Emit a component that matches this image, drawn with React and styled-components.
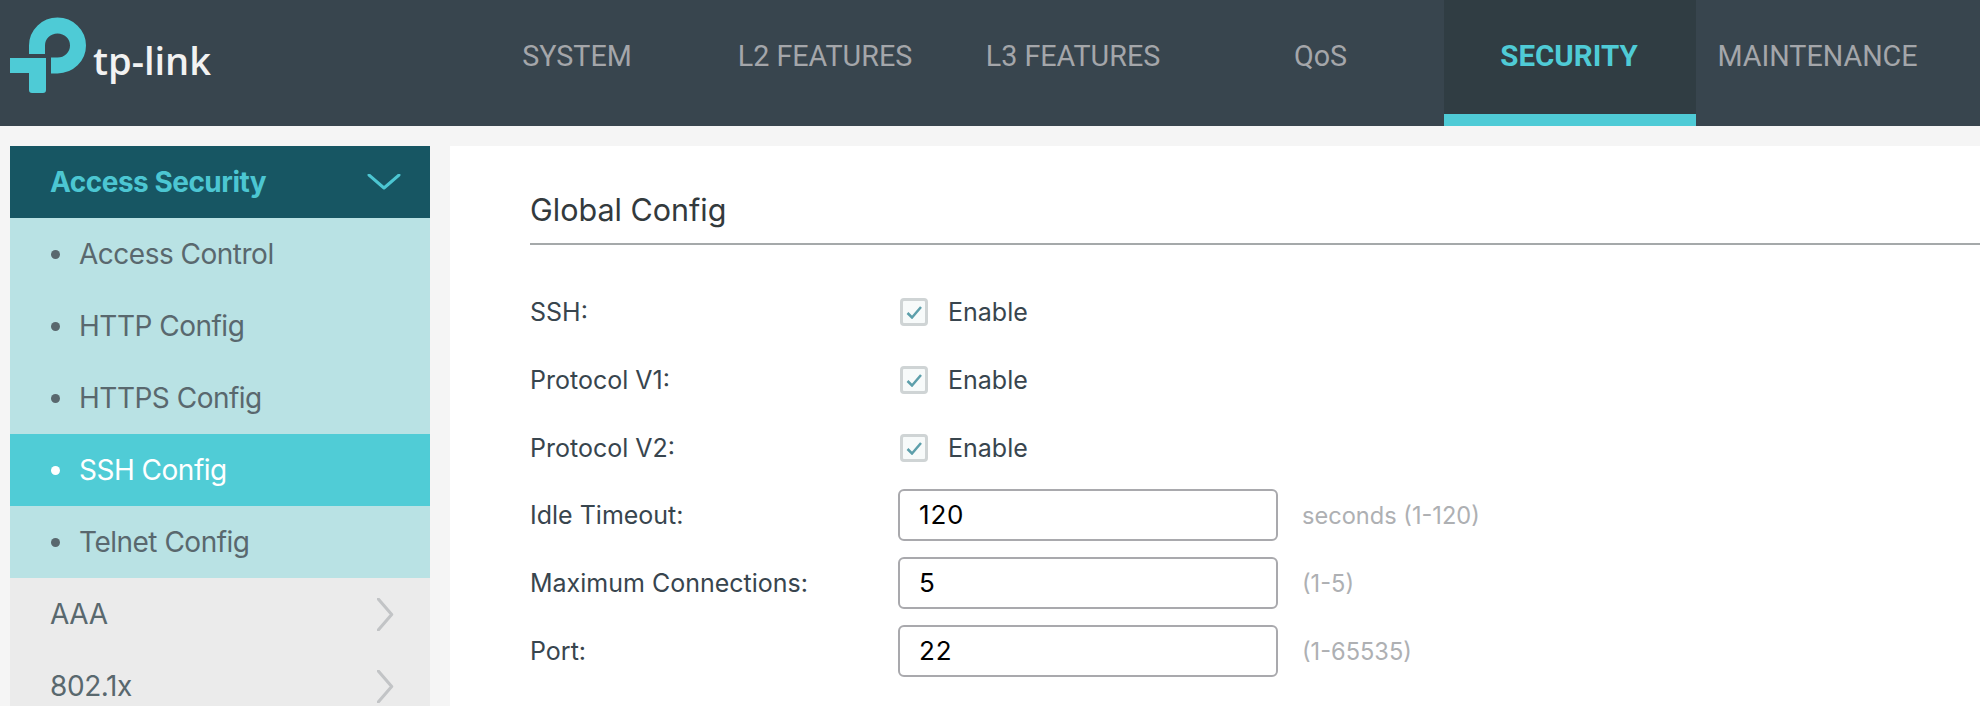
import React from "react";
import styled, { createGlobalStyle } from "styled-components";

const Global = createGlobalStyle`
  html, body { margin: 0; padding: 0; height: 100%; background: #f5f5f5; }
  #root { height: 100%; }
  * { box-sizing: border-box; }
`;
const Page = styled.div`
  width: 1980px; height: 706px; overflow: hidden; display: flex; flex-direction: column;
  background: #f5f5f5; font-family: Inter, "Liberation Sans", sans-serif;
`;
const Header = styled.header`
  height: 126px; flex: none; background: #38454e; display: flex; align-items: stretch;
`;
const Brand = styled.div`
  width: 453px; flex: none; position: relative;
`;
const BrandText = styled.span`
  position: absolute; left: 93px; top: 35px; font-family: "Open Sans", sans-serif; font-weight: 600;
  font-size: 38px; line-height: 50px; letter-spacing: 0; color: #f2f2f2;
`;
const Tab = styled.div`
  width: ${p => p.$w || 248}px; flex: none; display: flex; align-items: center; justify-content: center;
  font-family: Roboto, sans-serif; font-size: ${p => (p.$active ? 29.5 : 28.7)}px; padding-bottom: 2px;
  padding-right: ${p => (p.$active ? 2 : 0)}px;
  font-weight: ${p => (p.$active ? 700 : 400)};
  color: ${p => (p.$active ? "#4fcbd6" : "#a4a6aa")};
  background: ${p => (p.$active ? "#303d43" : "transparent")};
  border-bottom: 12px solid ${p => (p.$active ? "#4fcbd6" : "transparent")};
  white-space: nowrap;
`;
const Body = styled.div`
  flex: 1; display: flex; gap: 20px; padding: 20px 0 0 10px; min-height: 0;
`;
const Side = styled.nav`
  width: 420px; flex: none; display: flex; flex-direction: column;
`;
const GroupHead = styled.div`
  height: 72px; flex: none; background: #175663; color: #4cc6d2; font-weight: 700; font-size: 28px;
  letter-spacing: -0.5px;
  display: flex; align-items: center; justify-content: space-between; padding: 0 29px 0 40px;
`;
const SubItem = styled.div`
  height: 72px; flex: none; display: flex; align-items: center; padding-left: 40px; font-size: 28px;
  letter-spacing: -0.5px;
  background: ${p => (p.$active ? "#50ccd6" : "#b9e2e4")};
  color: ${p => (p.$active ? "#ffffff" : "#59686e")};
`;
const Dot = styled.span`
  width: 9px; height: 9px; border-radius: 50%; background: currentColor; margin: 0 19px 0 1px; flex: none;
`;
const Item = styled.div`
  height: 72px; flex: none; display: flex; align-items: center; justify-content: space-between;
  padding: 0 36px 0 40px; font-size: 28px; letter-spacing: -0.4px; background: #ebebeb; color: #59686e;
`;
const Main = styled.main`
  flex: 1; background: #fff; padding: 0 0 0 80px; min-width: 0;
`;
const Title = styled.h2`
  margin: 0; height: 99px; padding-top: 42px; font-size: 30.5px; line-height: 44px; font-weight: 400; color: #333a3d;
  border-bottom: 2px solid #a5a9aa;
`;
const Form = styled.div`
  padding-top: 33px; display: flex; flex-direction: column;
`;
const InputGroup = styled.div`
  margin-top: -1px; display: flex; flex-direction: column;
`;
const Row = styled.div`
  height: 68px; display: flex; align-items: center; font-size: 25px; color: #38454e;
`;
const Label = styled.div`
  width: 368px; flex: none;
`;
const Box = styled.span`
  width: 28px; height: 28px; border: 3px solid #cfd4d5; border-radius: 4px; background: #f7fafa;
  display: flex; align-items: center; justify-content: center; margin: 0 20px 0 2px; flex: none;
`;
const Input = styled.div`
  width: 380px; height: 52px; margin-top: -1px; border: 2px solid #a9a9ad; border-radius: 6px; background: #fff;
  display: flex; align-items: center; padding-left: 19px; color: #000; font-size: 26px; letter-spacing: 0.8px; flex: none;
`;
const Hint = styled.span`
  margin-left: 24px; font-size: 23.6px; color: #aeb0b3;
`;

const Logo = () => (
  <svg width="100" height="110" viewBox="0 0 100 110" style={{ position: "absolute", left: 0, top: 0 }} aria-hidden="true">
    <path d="M37 54 V45.5 A20.5 20 0 1 1 57.5 65.5 H51" fill="none" stroke="#4ecbd6" strokeWidth="16" />
    <path d="M10 58 H46 V90 Q46 93 43 93 H32 Q29 93 29 90 V73 H10 Z" fill="#4ecbd6" />
  </svg>
);
const Chevron = ({ dir, color, w, h }) => (
  <svg width={w} height={h} viewBox={dir === "down" ? "0 0 32 16" : "0 0 16 32"} aria-hidden="true">
    <path d={dir === "down" ? "M1 1 L16 14 L31 1" : "M1 1 L14 16 L1 31"} fill="none" stroke={color} strokeWidth="3" strokeLinecap="round" strokeLinejoin="round" />
  </svg>
);
const Check = () => (
  <svg width="16" height="14" viewBox="0 0 16 14" aria-hidden="true">
    <path d="M1.5 8 L6 12.5 L15 2" fill="none" stroke="#5d9fab" strokeWidth="2.5" />
  </svg>
);

const tabs = [["SYSTEM"], ["L2 FEATURES"], ["L3 FEATURES"], ["QoS", false, 247], ["SECURITY", true, 252], ["MAINTENANCE", false, 243]];
const subs = ["Access Control", "HTTP Config", "HTTPS Config", "SSH Config", "Telnet Config"];
const enables = ["SSH:", "Protocol V1:", "Protocol V2:"];
const inputs = [["Idle Timeout:", "120", "seconds (1-120)"], ["Maximum Connections:", "5", "(1-5)"], ["Port:", "22", "(1-65535)"]];

export default function App() {
  return (
    <Page>
      <Global />
      <Header>
        <Brand>
          <Logo />
          <BrandText>tp-link</BrandText>
        </Brand>
        {tabs.map(([t, a, w]) => <Tab key={t} $active={a} $w={w}>{t}</Tab>)}
      </Header>
      <Body>
        <Side>
          <GroupHead>Access Security <Chevron dir="down" color="#4cc6d2" w={34} h={16} /></GroupHead>
          {subs.map(s => <SubItem key={s} $active={s === "SSH Config"}><Dot />{s}</SubItem>)}
          <Item>AAA <Chevron dir="right" color="#c2c4c6" w={17} h={33} /></Item>
          <Item>802.1x <Chevron dir="right" color="#c2c4c6" w={17} h={33} /></Item>
        </Side>
        <Main>
          <Title>Global Config</Title>
          <Form>
            {enables.map(l => (
              <Row key={l}><Label>{l}</Label><Box><Check /></Box>Enable</Row>
            ))}
            <InputGroup>
              {inputs.map(([l, v, h]) => (
                <Row key={l}><Label>{l}</Label><Input>{v}</Input><Hint>{h}</Hint></Row>
              ))}
            </InputGroup>
          </Form>
        </Main>
      </Body>
    </Page>
  );
}
